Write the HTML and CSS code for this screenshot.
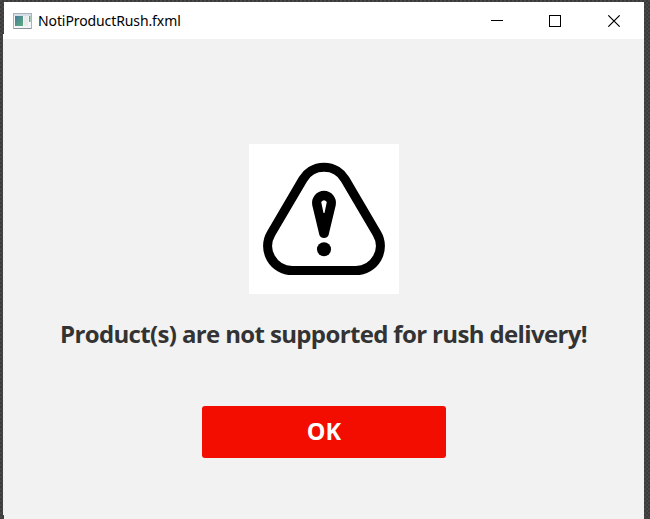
FILE: index.html
```html
<!DOCTYPE html>
<html lang="en">
<head>
<meta charset="utf-8">
<title>NotiProductRush.fxml</title>
<link rel="stylesheet" href="styles.css">
</head>
<body>
<div class="window">
  <header class="titlebar">
    <svg class="app-icon" width="19" height="16" viewBox="0 0 19 16">
      <defs><linearGradient id="pane" x1="0" y1="0" x2="1" y2="1"><stop offset="0" stop-color="#4678a0"/><stop offset="1" stop-color="#5eae78"/></linearGradient></defs>
      <rect x=".5" y=".5" width="18" height="15" fill="#f3f5f7" stroke="#aab2bb"/>
      <rect x="1" y="1" width="17" height="2" fill="#d5dde7"/>
      <rect x="2" y="3" width="8" height="10" fill="url(#pane)"/>
      <rect x="11" y="3" width="4" height="10" fill="#e8eaec"/>
      <rect x="16" y="3" width="1.5" height="6" fill="#65ae80"/>
      <path d="M1 15.5h17" stroke="#8c959e"/>
    </svg>
    <span class="title">NotiProductRush.fxml</span>
    <svg class="controls" width="130" height="12" viewBox="0 0 130 12" fill="none" stroke="#000">
      <path d="M0 5.5h12M58.500 .5h11v11h-11z" shape-rendering="crispEdges"/>
      <path d="M117.300 .3l11.400 11.400M128.700 .3l-11.400 11.400" stroke-width="1.100"/>
    </svg>
  </header>
  <main class="content">
    <svg class="warning" width="150" height="150" viewBox="0 0 150 150">
      <path d="M53.900 35.300A24.500 24.500 0 0 1 96.100 35.300L127.900 89.500A24.500 24.500 0 0 1 106.800 126.500H43.200A24.500 24.500 0 0 1 22.100 89.500Z" fill="none" stroke="#000" stroke-width="9.200"/>
      <path fill-rule="evenodd" d="M63.200 61A12 12 0 1 1 86.800 61L79.600 91Q78.500 94 75 94T70.400 91ZM72.200 58Q75 54.500 77.800 58L75.500 69H74.500Z"/>
      <circle cx="75" cy="105.300" r="7"/>
    </svg>
    <p class="message">Product(s) are not supported for rush delivery!</p>
    <button class="ok">OK</button>
  </main>
</div>
</body>
</html>
```
FILE: styles.css
```css
* { box-sizing: border-box; }
body {
  margin: 0;
  height: 519px;
  padding: 2px 6px 0 3px;
  overflow: hidden;
  background: repeating-conic-gradient(#3b3b3b 0 25%, #484848 0 50%) 0 0 / 4px 4px;
  font-family: "Open Sans", "Noto Sans", sans-serif;
}
.window {
  height: 517px;
  background: #f2f2f2;
  clip-path: polygon(1px 0, 100% 0, 100% 100%, 1px 100%, 1px 513px, 0 513px, 0 32px, 1px 32px);
}
.titlebar {
  display: flex;
  align-items: center;
  height: 37px;
  padding: 0 23px 0 10px;
  background: #fff;
}
.title {
  margin-left: 6px;
  font-family: "Noto Sans", sans-serif;
  font-size: 14px;
  letter-spacing: -0.1px;
  color: #000;
  white-space: nowrap;
}
.controls { margin-left: auto; }
.content {
  display: flex;
  flex-direction: column;
  align-items: center;
  padding-top: 105px;
}
.warning { background: #fff; }
.message {
  margin: 22px 0 0;
  height: 36px;
  line-height: 36px;
  font-size: 24px;
  font-weight: 700;
  letter-spacing: -0.64px;
  color: #333;
  white-space: nowrap;
}
.ok {
  width: 244px;
  height: 52px;
  margin: 53.500px 0 0 1px;
  padding: 0 0 1px;
  border: 0;
  border-radius: 3px;
  background: #f20d00;
  color: #fff;
  font: 700 23.500px/51px "Open Sans", sans-serif;
}
```
